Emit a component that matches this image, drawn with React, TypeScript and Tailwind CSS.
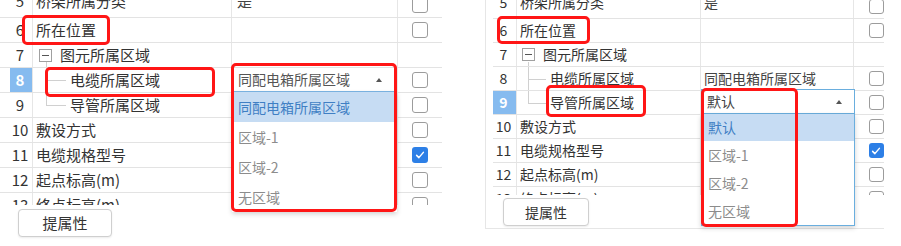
import React from "react";

type Row = {
  n: number;
  name: string;
  val?: string;
  chk?: boolean;
  tree?: "parent" | "mid" | "last";
};

type Sizes = {
  panel: string;
  text: string;
  table: string;
  first: string;
  rowH: string;
  num: string;
  name: string;
  val: string;
  chk: string;
  box: string;
  boxMl: string;
  vLine: string;
  hLine: string;
  childPl: string;
  button: string;
  active: number;
};

const LEFT: Sizes = {
  panel: "w-[442px] h-[246px]",
  text: "text-[15px]",
  table: "h-[205px]",
  first: "-mt-[7px]",
  rowH: "h-[25px]",
  num: "w-[33px] pl-[10px]",
  name: "w-[199px] pl-[3px]",
  val: "w-[166px] pl-[5px]",
  chk: "w-[44px]",
  box: "h-[16px] w-[16px]",
  boxMl: "ml-[3px]",
  vLine: "left-[13px]",
  hLine: "left-[13px] w-[20px]",
  childPl: "pl-[37px]",
  button: "mt-[4px] ml-[18px] h-[28px] w-[94px] text-[15px]",
  active: 8,
};

const RIGHT: Sizes = {
  panel: "ml-[43px] w-[399px] h-[229px] border-l border-b border-[#e6e6e6] pl-[7px]",
  text: "text-[14px]",
  table: "h-[195px]",
  first: "-mt-[5px]",
  rowH: "h-[24px]",
  num: "w-[24px]",
  name: "w-[184px] pl-[3px]",
  val: "w-[153px] pl-[3px]",
  chk: "w-[30px] pl-[14px]",
  box: "h-[15px] w-[15px]",
  boxMl: "ml-[2px]",
  vLine: "left-[11px]",
  hLine: "left-[11px] w-[18px]",
  childPl: "pl-[33px]",
  button: "mt-[3px] ml-[10px] h-[28px] w-[86px] text-[14px]",
  active: 9,
};

function rowsFor(side: "l" | "r"): Row[] {
  return [
    { n: 5, name: "桥架所属分类", val: "是", chk: false },
    { n: 6, name: "所在位置", chk: false },
    { n: 7, name: "图元所属区域", tree: "parent" },
    { n: 8, name: "电缆所属区域", tree: "mid", val: side === "r" ? "同配电箱所属区域" : "", chk: false },
    { n: 9, name: "导管所属区域", tree: "last", chk: false },
    { n: 10, name: "敷设方式", chk: false },
    { n: 11, name: "电缆规格型号", chk: true },
    { n: 12, name: "起点标高(m)", chk: false },
    { n: 13, name: "终点标高(m)", chk: false },
  ];
}

function Check({ on, s }: { on: boolean; s: Sizes }) {
  if (on) {
    return (
      <span className={`${s.box} flex items-center justify-center rounded-[3px] bg-[#2d7fe6]`}>
        <svg viewBox="0 0 16 16" className="h-[12px] w-[12px]">
          <path d="M3.5 8.5l3 3 6-7" fill="none" stroke="#fff" strokeWidth="2" strokeLinecap="round" strokeLinejoin="round" />
        </svg>
      </span>
    );
  }
  return <span className={`${s.box} rounded-[3px] border border-[#9c9c9c] bg-white`} />;
}

function NameCell({ r, s, lift }: { r: Row; s: Sizes; lift: string }) {
  if (r.tree === "parent") {
    return (
      <div className={`${s.name} relative flex shrink-0 items-center border-r border-[#e6e6e6]`}>
        <span className={`${s.boxMl} flex h-[13px] w-[13px] items-center justify-center border border-[#a0a0a0] bg-white`}>
          <span className="h-px w-[7px] bg-[#555]" />
        </span>
        <span className="ml-[8px]">{r.name}</span>
        <span className={`absolute ${s.vLine} bottom-0 top-[calc(50%+7px)] w-px bg-[#d0d0d0]`} />
      </div>
    );
  }
  if (r.tree) {
    return (
      <div className={`${s.name} ${s.childPl} relative flex shrink-0 items-center border-r border-[#e6e6e6]`}>
        <span className={`absolute ${s.vLine} top-0 w-px bg-[#d0d0d0] ${r.tree === "mid" ? "bottom-0" : "bottom-1/2"}`} />
        <span className={`absolute ${s.hLine} top-1/2 h-px bg-[#d0d0d0]`} />
        <span>{r.name}</span>
      </div>
    );
  }
  return (
    <div className={`${s.name} flex shrink-0 items-center border-r border-[#e6e6e6]`}>
      <span className={lift}>{r.name}</span>
    </div>
  );
}

function TableRow({ r, s, first }: { r: Row; s: Sizes; first: boolean }) {
  const active = r.n === s.active;
  const lift = first ? "-translate-y-[4px]" : "";
  return (
    <div className={`flex ${s.rowH} ${first ? s.first : ""} border-b border-[#e3e3e3]`}>
      <div className={`${s.num} flex shrink-0 border-r border-[#e6e6e6]`}>
        <div
          className={`flex flex-1 items-center justify-center pr-[2px] ${
            active ? "bg-[#86bbef] font-bold text-white" : "text-[#333]"
          }`}
        >
          <span className={lift}>{r.n}</span>
        </div>
      </div>
      <NameCell r={r} s={s} lift={lift} />
      <div className={`${s.val} flex shrink-0 items-center border-r border-[#e6e6e6] text-[#444]`}>
        <span className={lift}>{r.val}</span>
      </div>
      <div className={`${s.chk} flex shrink-0 items-center justify-center`}>
        {r.chk !== undefined && <Check on={r.chk} s={s} />}
      </div>
    </div>
  );
}

function Mark({ className }: { className: string }) {
  return <div className={`pointer-events-none absolute rounded-[5px] border-[3px] border-[#ff1616] ${className}`} />;
}

function Caret() {
  return <span className="h-0 w-0 border-x-[3px] border-b-[4px] border-x-transparent border-b-[#555]" />;
}

function Panel({ s, side, children }: { s: Sizes; side: "l" | "r"; children: React.ReactNode }) {
  return (
    <div className={`relative shrink-0 ${s.panel} ${s.text} text-[#333]`}>
      <div className={`${s.table} overflow-hidden`}>
        {rowsFor(side).map((r, i) => (
          <TableRow key={r.n} r={r} s={s} first={i === 0} />
        ))}
      </div>
      <button
        className={`${s.button} flex items-center justify-center rounded-[4px] border border-[#cfcfcf] bg-white text-[#333] shadow-[0_1px_2px_rgba(0,0,0,0.08)]`}
      >
        提属性
      </button>
      {children}
    </div>
  );
}

export default function App() {
  const opts = ["区域-1", "区域-2", "无区域"];
  return (
    <div className="flex h-[246px] w-[901px] overflow-hidden bg-white font-['Noto_Sans_CJK_SC','Noto_Sans',sans-serif]">
      <Panel s={LEFT} side="l">
        <div className="absolute left-[232px] top-[68px] flex h-[24px] w-[165px] items-center justify-between border-b border-[#7db7e6] bg-white pl-[6px] pr-[15px] text-[14px] text-[#555]">
          <span>同配电箱所属区域</span>
          <Caret />
        </div>
        <div className="absolute left-[232px] top-[92px] w-[165px] bg-white text-[14px] shadow-[0_2px_5px_rgba(0,0,0,0.18)]">
          <div className="flex h-[30px] items-center bg-[#c6dcf3] pl-[6px] text-[#3f7fc4]">同配电箱所属区域</div>
          {opts.map((o) => (
            <div key={o} className="flex h-[30px] items-center pl-[6px] text-[#8c8c8c]">
              {o}
            </div>
          ))}
        </div>
        <Mark className="left-[22px] top-[15px] h-[30px] w-[88px]" />
        <Mark className="left-[45px] top-[67px] h-[30px] w-[170px]" />
        <Mark className="left-[231px] top-[63px] h-[149px] w-[166px]" />
      </Panel>
      <Panel s={RIGHT} side="r">
        <div className="absolute left-[215px] top-[89px] flex h-[25px] w-[154px] items-center justify-between border border-[#6aaede] bg-white pl-[5px] pr-[12px] text-[14px] text-[#444]">
          <span>默认</span>
          <Caret />
        </div>
        <div className="absolute left-[215px] top-[114px] w-[154px] border border-t-0 border-[#6aaede] bg-white text-[14px] shadow-[0_2px_5px_rgba(0,0,0,0.18)]">
          <div className="flex h-[27px] items-center bg-[#c6dcf3] pl-[6px] text-[#3f7fc4]">默认</div>
          {opts.map((o) => (
            <div key={o} className="flex h-[28px] items-center pl-[6px] text-[#8c8c8c]">
              {o}
            </div>
          ))}
        </div>
        <Mark className="left-[11px] top-[16px] h-[28px] w-[93px]" />
        <Mark className="left-[60px] top-[85px] h-[32px] w-[100px]" />
        <Mark className="left-[215px] top-[88px] h-[139px] w-[97px]" />
      </Panel>
    </div>
  );
}
